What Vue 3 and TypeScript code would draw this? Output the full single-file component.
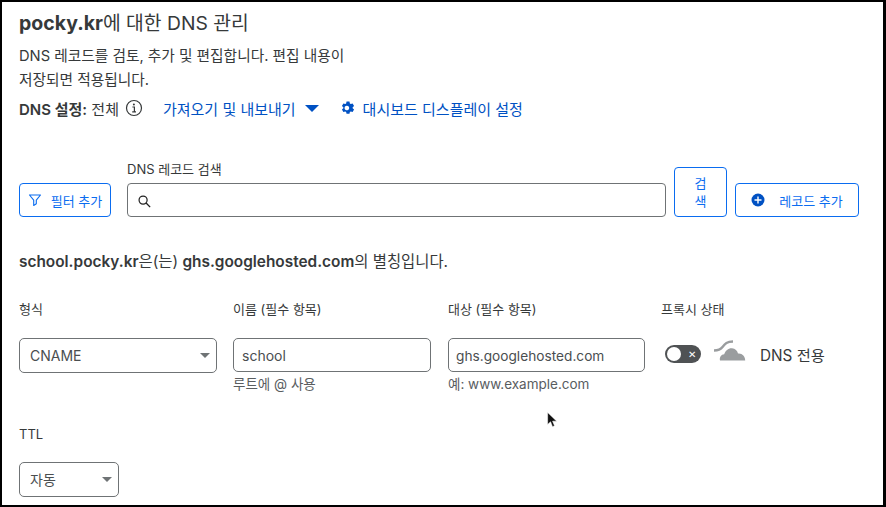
<template>
  <div class="frame">
    <h2 class="title"><b>pocky.kr</b>에 대한 DNS 관리</h2>
    <p class="desc">DNS 레코드를 검토, 추가 및 편집합니다. 편집 내용이<br />저장되면 적용됩니다.</p>

    <div class="settings">
      <span class="mode"><b>DNS 설정:</b> 전체</span>
      <svg class="info" width="18" height="18" viewBox="0 0 18 18">
        <circle cx="9" cy="9" r="7.5" fill="none" stroke="#36393a" stroke-width="1.2" />
        <path d="M7.4 8h2v4.6M7.2 12.8h3.8" fill="none" stroke="#36393a" stroke-width="1.2" />
        <circle cx="8.9" cy="5.4" r="1" fill="#36393a" />
      </svg>
      <a class="link import">가져오기 및 내보내기</a>
      <svg class="caret" width="14" height="7" viewBox="0 0 14 7"><path d="M0 0h14L7 7z" fill="#0051c3" /></svg>
      <svg class="gear" width="14" height="14" viewBox="0 0 24 24">
        <path
          fill="#0051c3"
          fill-rule="evenodd"
          d="M9.500 1h5l.7 3.200 1.600.9 3.100-1 2.500 4.300-2.400 2.200v1.800l2.400 2.200-2.500 4.300-3.100-1-1.600.9-.7 3.200h-5l-.7-3.200-1.600-.9-3.100 1-2.500-4.300 2.400-2.200v-1.800L1.600 8.400l2.500-4.300 3.100 1 1.600-.9zM12 8.500a4 4 0 1 0 0 7 4 4 0 0 0 0-7z"
        />
      </svg>
      <a class="link">대시보드 디스플레이 설정</a>
    </div>

    <div class="search-row">
      <button class="btn filter">
        <svg width="14" height="14" viewBox="0 0 14 14">
          <path d="M1.500 2h11L8.300 7.200v3.600L5.700 12.500V7.200z" fill="none" stroke="#0a6cf0" stroke-width="1.100" stroke-linejoin="round" />
        </svg>
        필터 추가
      </button>
      <div class="search-field">
        <label class="small-label">DNS 레코드 검색</label>
        <div class="search-input">
          <svg width="15" height="15" viewBox="0 0 16 16">
            <circle cx="6.500" cy="6.500" r="4.300" fill="none" stroke="#222" stroke-width="1.300" />
            <path d="M9.700 9.700l4.300 4.300" stroke="#222" stroke-width="1.500" />
          </svg>
        </div>
      </div>
      <button class="btn search">검색</button>
      <button class="btn add">
        <svg width="14" height="14" viewBox="0 0 14 14">
          <circle cx="7" cy="7" r="6.500" fill="#0051c3" />
          <path d="M7 3.500v7M3.500 7h7" stroke="#fff" stroke-width="1.400" />
        </svg>
        레코드 추가
      </button>
    </div>

    <p class="alias"><b>school.pocky.kr</b>은(는) <b>ghs.googlehosted.com</b>의 별칭입니다.</p>

    <div class="record-form">
      <div class="col type">
        <label class="small-label">형식</label>
        <div class="control select"><span>CNAME</span><i class="arrow"></i></div>
      </div>
      <div class="col name">
        <label class="small-label">이름 (필수 항목)</label>
        <div class="control">school</div>
        <div class="hint">루트에 @ 사용</div>
      </div>
      <div class="col target">
        <label class="small-label">대상 (필수 항목)</label>
        <div class="control target-input">ghs.googlehosted.com</div>
        <div class="hint">예: www.example.com</div>
      </div>
      <div class="col proxy">
        <label class="small-label">프록시 상태</label>
        <div class="proxy-state">
          <span class="toggle"><span class="knob"></span><span class="x">✕</span></span>
          <svg width="32" height="21" viewBox="0 0 32 21">
            <path d="M6 20.500c-.8-3.200 1.200-6 4.200-6.200C11.500 10.500 14.500 8 18 8.300c3.200.3 5.400 2.500 6 5.200 3.800-.6 7.200 2.600 7.200 7z" fill="#9a9d9f" />
            <path d="M0 10.500c4.500 0 6.500-.8 8.500-3.500 2.500-3.500 4.500-5.500 10.500-5.500" fill="none" stroke="#9a9d9f" stroke-width="2.400" />
          </svg>
          <span class="proxy-text">DNS 전용</span>
        </div>
      </div>
    </div>

    <div class="ttl">
      <label class="small-label">TTL</label>
      <div class="control select ttl-select"><span>자동</span><i class="arrow"></i></div>
    </div>

    <svg class="cursor" width="11" height="16" viewBox="0 0 12 18">
      <path d="M0.500 0.500v13.500l3.300-3 2.200 5.500 2.300-1-2.200-5.200h4.600z" fill="#111" stroke="#fff" stroke-width="0.600" />
    </svg>
  </div>
</template>

<script setup lang="ts">
</script>

<style>
html,
body {
  margin: 0;
  background: #fff;
}
</style>

<style scoped>
.frame {
  position: relative;
  box-sizing: border-box;
  width: 886px;
  height: 507px;
  overflow: hidden;
  border: solid #000;
  border-width: 2px 3px 2px 2px;
  padding: 9px 0 0 17px;
  background: #fff;
  color: #36393a;
  font-family: Inter, "Noto Sans CJK KR", sans-serif;
  font-size: 14px;
}

b {
  font-weight: 600;
}

.title {
  margin: 0;
  font-size: 19.3px;
  line-height: 24px;
  font-weight: 400;
}

.title b {
  font-size: 19.5px;
  font-weight: 700;
}

.desc {
  margin: 9px 0 0;
  font-size: 14.7px;
  line-height: 24px;
}

.settings {
  display: flex;
  align-items: center;
  height: 24px;
  margin-top: 4px;
  font-size: 15px;
}

.info {
  margin-left: 6px;
}

.link {
  color: #0051c3;
}

.import {
  margin-left: 20px;
}

.caret {
  margin-left: 9px;
}

.gear {
  margin-left: 22px;
  margin-right: 8px;
}

.search-row {
  display: flex;
  align-items: flex-end;
  margin-top: 41px;
}

.btn {
  box-sizing: border-box;
  height: 34px;
  border: 1px solid #0a6cf0;
  border-radius: 4px;
  background: #fff;
  color: #0a6cf0;
  font-family: inherit;
  font-size: 13px;
  padding: 0;
  display: flex;
  align-items: center;
  justify-content: center;
}

.filter {
  width: 92px;
  gap: 9px;
}

.search-field {
  width: 539px;
  margin-left: 16px;
}

.small-label {
  display: block;
  font-size: 13px;
  line-height: 16px;
}

.search-input {
  box-sizing: border-box;
  height: 34px;
  margin-top: 6px;
  border: 1px solid #6f7375;
  border-radius: 4px;
  padding: 10px 0 0 9px;
}

.search {
  width: 53px;
  height: 50px;
  margin-left: 8px;
  padding: 0 18px;
  line-height: 18px;
  text-align: center;
}

.add {
  width: 124px;
  margin-left: 8px;
  gap: 14px;
}

.alias {
  margin: 34px 0 0;
  font-size: 15.4px;
  line-height: 22px;
}

.record-form {
  display: flex;
  margin-top: 26px;
}

.col {
  width: 198px;
  margin-right: 16px;
}

.target {
  width: 197px;
  margin-left: 1px;
}

.proxy {
  width: auto;
  margin: 0;
}

.col > .small-label {
  height: 20px;
  line-height: 20px;
  margin-bottom: 19px;
}

.control {
  box-sizing: border-box;
  height: 34px;
  border: 1px solid #6f7375;
  border-radius: 5px;
  padding: 0 8px;
  line-height: 34px;
  font-size: 14px;
  color: #4a4e50;
}

.target-input {
  padding-left: 7px;
  font-size: 13.7px;
}

.select {
  display: flex;
  align-items: center;
  justify-content: space-between;
  padding: 0 6px 0 10px;
  height: 35px;
}

.arrow {
  width: 0;
  height: 0;
  border-left: 5px solid transparent;
  border-right: 5px solid transparent;
  border-top: 5px solid #6f7375;
}

.hint {
  margin-top: 3px;
  font-size: 13.5px;
  line-height: 18px;
  color: #595d5f;
}

.proxy-state {
  display: flex;
  align-items: center;
  height: 32px;
  margin-left: 4px;
}

.toggle {
  position: relative;
  display: block;
  width: 36px;
  height: 18px;
  border-radius: 9px;
  background: #4f5254;
}

.knob {
  position: absolute;
  left: 2px;
  top: 2px;
  width: 14px;
  height: 14px;
  border-radius: 50%;
  background: #fff;
}

.x {
  position: absolute;
  right: 5px;
  top: 0;
  font-size: 10px;
  line-height: 18px;
  color: #fff;
}

.proxy-state svg {
  margin-left: 13px;
  margin-top: -8px;
}

.proxy-text {
  margin-left: 14px;
  font-size: 15.3px;
}

.ttl {
  margin-top: 31px;
}

.ttl .small-label {
  font-size: 13px;
  line-height: 20px;
}

.ttl-select {
  width: 100px;
  margin-top: 18px;
}

.cursor {
  position: absolute;
  left: 545px;
  top: 410px;
}
</style>
